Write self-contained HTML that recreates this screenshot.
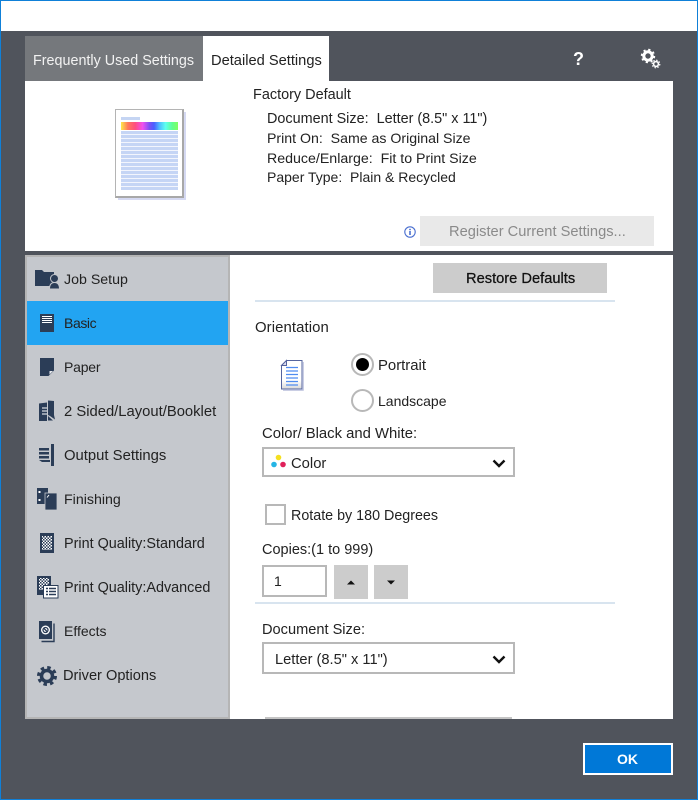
<!DOCTYPE html>
<html><head><meta charset="utf-8"><style>
html,body{margin:0;padding:0;width:698px;height:800px;overflow:hidden;background:#fff}
body{position:relative;font-family:"Liberation Sans",sans-serif;font-size:14px;color:#222}
.a{position:absolute}
.t{position:absolute;white-space:nowrap;line-height:20px;height:20px}
svg{position:absolute;overflow:visible}
</style></head><body>
<div class="a" style="left:0;top:0;width:696px;height:798px;border:1px solid #0f80d8"></div>
<div class="a" style="left:1px;top:31px;width:696px;height:768px;background:#50545c"></div>
<div class="a" style="left:25px;top:36px;width:178px;height:45px;background:#75787c"></div>
<div class="a" style="left:203px;top:36px;width:126px;height:45px;background:#fff"></div>
<div class="t" style="left:33px;top:51px;color:#f2f2f2;font-size:14.35px">Frequently Used Settings</div>
<div class="t" style="left:211px;top:51px;font-size:14.66px">Detailed Settings</div>
<div class="t" style="left:573px;top:49px;color:#fff;font-weight:bold;font-size:18px">?</div>
<svg style="left:640px;top:48px" width="22" height="22" viewBox="0 0 22 22"><circle cx="8" cy="8" r="4.2" fill="none" stroke="#fff" stroke-width="3"/><circle cx="8" cy="8" r="6.2" fill="none" stroke="#fff" stroke-width="2" stroke-dasharray="2.2 2.67"/><circle cx="16" cy="16" r="2.4" fill="none" stroke="#fff" stroke-width="1.6"/><circle cx="16" cy="16" r="3.8" fill="none" stroke="#fff" stroke-width="1.2" stroke-dasharray="1.5 1.48"/></svg>

<div class="a" style="left:25px;top:81px;width:648px;height:170px;background:#fff"></div>
<div class="a" style="left:118px;top:112px;width:68px;height:88px;background:#d5d9f2"></div>
<div class="a" style="left:115px;top:109px;width:66px;height:86px;background:#fff;border:1px solid #b4b4b4;border-right:2px solid #a8a8a8;border-bottom:2px solid #a8a8a8"></div>
<div class="a" style="left:121px;top:117px;width:19px;height:3px;background:#c5d5f3"></div>
<div class="a" style="left:121px;top:122px;width:57px;height:8px;background:linear-gradient(90deg,#ffe84a 0%,#ff7a5a 12%,#ff4f7f 25%,#f04ff0 38%,#7a50f5 50%,#4a60ff 58%,#4fc0ff 68%,#5ffff0 78%,#60ff90 90%,#80ff60 100%)"></div>
<div class="a" style="left:121px;top:131px;width:57px;height:59px;background:repeating-linear-gradient(180deg,#c5d5f5 0,#c5d5f5 3px,#f2f5fd 3px,#f2f5fd 4px)"></div>
<div class="t" style="left:253px;top:85px;font-size:14.45px">Factory Default</div>
<div class="t" style="left:267px;top:109px;font-size:14.4px">Document Size:&nbsp; Letter (8.5" x 11")</div>
<div class="t" style="left:267px;top:128px;font-size:14.15px">Print On:&nbsp; Same as Original Size</div>
<div class="t" style="left:267px;top:149px;font-size:14.2px">Reduce/Enlarge:&nbsp; Fit to Print Size</div>
<div class="t" style="left:267px;top:167px">Paper Type:&nbsp; Plain &amp; Recycled</div>
<svg style="left:404px;top:226px" width="12" height="12" viewBox="0 0 12 12"><circle cx="6" cy="6" r="5.2" fill="none" stroke="#4a6fd0" stroke-width="1.1"/><rect x="5.2" y="5" width="1.6" height="4" fill="#4a6fd0"/><rect x="5.2" y="2.8" width="1.6" height="1.4" fill="#4a6fd0"/></svg>
<div class="a" style="left:420px;top:216px;width:234px;height:30px;background:#e9e9e9"></div>
<div class="t" style="left:449px;top:222px;color:#8a8a8a;font-size:14.66px">Register Current Settings...</div>

<div class="a" style="left:25px;top:255px;width:201px;height:460px;background:#c5c8cd;border:2px solid #b5b5b5"></div>
<div class="a" style="left:230px;top:255px;width:443px;height:464px;background:#fff"></div>
<div class="a" style="left:27px;top:301px;width:201px;height:44px;background:#22a4f2"></div>

<div class="t" style="left:64px;top:270px;font-size:14.2px">Job Setup</div>
<div class="t" style="left:64px;top:313px;letter-spacing:-.4px">Basic</div>
<div class="t" style="left:64px;top:357px;letter-spacing:-.2px">Paper</div>
<div class="t" style="left:64px;top:402px;font-size:14.8px">2 Sided/Layout/Booklet</div>
<div class="t" style="left:64px;top:446px;font-size:14.85px">Output Settings</div>
<div class="t" style="left:64px;top:490px;font-size:14.2px">Finishing</div>
<div class="t" style="left:64px;top:534px;font-size:14.4px">Print Quality:Standard</div>
<div class="t" style="left:64px;top:578px;font-size:14.4px">Print Quality:Advanced</div>
<div class="t" style="left:64px;top:621px">Effects</div>
<div class="t" style="left:63px;top:666px;font-size:14.6px">Driver Options</div>

<svg style="left:35px;top:269px" width="24" height="21" viewBox="0 0 24 21"><path d="M0 1h7l2 2h10v14H0z" fill="#2b3d57"/><circle cx="19.500" cy="9.500" r="4" fill="#2b3d57" stroke="#c5c8cd"/><path d="M14.500 20c0-5 2-6.500 5-6.500s5 1.500 5 6.500z" fill="#2b3d57" stroke="#c5c8cd"/></svg>
<svg style="left:40px;top:314px" width="14" height="18" viewBox="0 0 14 18"><rect width="14" height="18" fill="#2b3d57"/><path d="M2 2.500h10M2 4.500h10M2 6.500h10M2 8.500h10" stroke="#fff" stroke-width="1"/></svg>
<svg style="left:40px;top:358px" width="14" height="18" viewBox="0 0 14 18"><path d="M0 0h14v12.500l-5.500 5.500H0z" fill="#2b3d57"/><path d="M9.500 13h3.500l-3.500 3.500z" fill="#e6e8ec"/></svg>
<svg style="left:39px;top:400px" width="16" height="21" viewBox="0 0 16 21"><path d="M0 3.500l8-1V21H0z" fill="#2b3d57"/><path d="M9 .5l6 .5v14l1 4.500-5-3.500-2-1z" fill="#2b3d57"/><path d="M3 8h5M3 11h5M3 14h5" stroke="#fff"/><path d="M9 16l5 4.500H9z" fill="#2b3d57"/></svg>
<svg style="left:39px;top:444px" width="16" height="22" viewBox="0 0 16 22"><rect x="12" width="3" height="22" fill="#2b3d57"/><path d="M0 4h10v2.500H0zM0 8h10v2.500H0zM0 12h10v2.500H0zM0 16h11v2l-8 0z" fill="#2b3d57"/></svg>
<svg style="left:37px;top:488px" width="20" height="22" viewBox="0 0 20 22"><rect width="11" height="16" fill="#2b3d57"/><rect x="1.500" y="3" width="2" height="2" fill="#fff"/><rect x="1.500" y="11" width="2" height="2" fill="#fff"/><rect x="8" y="5" width="12" height="17" fill="#2b3d57" stroke="#c5c8cd" stroke-width=".8"/><path d="M10 9.500l2-2.500" stroke="#fff"/></svg>
<svg style="left:40px;top:533px" width="14" height="20" viewBox="0 0 14 20"><defs><pattern id="c" width="3" height="3" patternUnits="userSpaceOnUse"><rect width="3" height="3" fill="#fff"/><rect width="1.500" height="1.500" fill="#2b3d57"/><rect x="1.500" y="1.500" width="1.500" height="1.500" fill="#2b3d57"/></pattern></defs><rect width="14" height="20" fill="#2b3d57"/><rect x="2" y="3" width="10" height="14" fill="url(#c)"/></svg>
<svg style="left:37px;top:576px" width="22" height="23" viewBox="0 0 22 23"><rect width="14" height="19" fill="#2b3d57"/><rect x="2" y="2" width="10" height="12" fill="url(#c)"/><rect x="6.500" y="9.500" width="14.500" height="12.500" fill="#fff" stroke="#2b3d57"/><path d="M9 12.500h10M9 15.500h10M9 18.500h10" stroke="#2b3d57" stroke-width="1.500"/><path d="M11.500 11v10" stroke="#fff"/></svg>
<svg style="left:39px;top:621px" width="16" height="21" viewBox="0 0 16 21"><path d="M15 2.500v18H2.500" fill="none" stroke="#2b3d57" stroke-width="1.400"/><rect width="13" height="18" fill="#2b3d57"/><circle cx="6.500" cy="9" r="4.500" fill="#fff"/><circle cx="6.500" cy="9" r="2.500" fill="none" stroke="#2b3d57" stroke-width="1.300"/><path d="M5 7.500l3 3" stroke="#2b3d57" stroke-width="1.300"/></svg>
<svg style="left:37px;top:666px" width="20" height="20" viewBox="0 0 20 20"><circle cx="10" cy="10" r="5.500" fill="none" stroke="#2b3d57" stroke-width="3.500"/><circle cx="10" cy="10" r="8.500" fill="none" stroke="#2b3d57" stroke-width="3" stroke-dasharray="3.500 3.170"/></svg>

<div class="a" style="left:433px;top:263px;width:174px;height:30px;background:#ccc"></div>
<div class="t" style="left:466px;top:269px;color:#111;-webkit-text-stroke:.25px #111;font-size:14.66px">Restore Defaults</div>
<div class="a" style="left:255px;top:300px;width:360px;height:2px;background:#d8e4ef"></div>
<div class="t" style="left:255px;top:318px;font-size:14.9px;letter-spacing:.1px">Orientation</div>
<svg style="left:281px;top:360px" width="23" height="31" viewBox="0 0 23 31"><defs><linearGradient id="g" x1="0" y1="0" x2="0" y2="1"><stop offset="0" stop-color="#fff"/><stop offset=".7" stop-color="#fff"/><stop offset="1" stop-color="#d8d8d8"/></linearGradient></defs><path d="M5.500.5h15.500v28.500H.5V5.500z" fill="url(#g)" stroke="#55649e"/><path d="M22 2v28H2" fill="none" stroke="#b8bedb" stroke-width="1.500"/><path d="M5.500.5v5H.5z" fill="#dde" stroke="#55649e"/><path d="M5 7.500h12M5 11h12M5 14.500h12M5 18h12M5 21.500h12M5 25h12" stroke="#4f8cf0" stroke-width="1.300"/></svg>
<div class="a" style="left:351px;top:353px;width:19px;height:19px;border:2px solid #b8b8b8;border-radius:50%"></div>
<div class="a" style="left:356px;top:358px;width:13px;height:13px;background:#000;border-radius:50%"></div>
<div class="t" style="left:378px;top:356px;font-size:14.9px">Portrait</div>
<div class="a" style="left:351px;top:389px;width:19px;height:19px;border:2px solid #b8b8b8;border-radius:50%"></div>
<div class="t" style="left:378px;top:391px">Landscape</div>
<div class="t" style="left:262px;top:424px;font-size:14.85px">Color/ Black and White:</div>
<div class="a" style="left:262px;top:447px;width:249px;height:26px;border:2px solid #b8b8b8"></div>
<svg style="left:271px;top:454px" width="15" height="15" viewBox="0 0 15 15"><circle cx="7.500" cy="3.500" r="2.800" fill="#f5e020"/><circle cx="3" cy="10.500" r="2.800" fill="#25b5e5"/><circle cx="12" cy="10.500" r="2.800" fill="#e0205a"/></svg>
<div class="t" style="left:291px;top:454px;font-size:14.8px">Color</div>
<svg style="left:492px;top:459px" width="14" height="9" viewBox="0 0 14 9"><path d="M1.500 1.500L7 7l5.500-5.500" fill="none" stroke="#111" stroke-width="2.400"/></svg>
<div class="a" style="left:265px;top:504px;width:17px;height:17px;border:2px solid #b8b8b8"></div>
<div class="t" style="left:291px;top:506px;font-size:14.3px">Rotate by 180 Degrees</div>
<div class="t" style="left:262px;top:540px;font-size:14.5px">Copies:(1 to 999)</div>
<div class="a" style="left:262px;top:565px;width:61px;height:28px;border:2px solid #b8b8b8"></div>
<div class="t" style="left:274px;top:571px">1</div>
<div class="a" style="left:334px;top:565px;width:34px;height:34px;background:#ccc"></div>
<div class="a" style="left:374px;top:565px;width:34px;height:34px;background:#ccc"></div>
<svg style="left:334px;top:565px" width="74" height="34" viewBox="0 0 74 34"><path d="M13 19.500l4-4 4 4z" fill="#111"/><path d="M53 15.500h8l-4 4z" fill="#111"/></svg>
<div class="a" style="left:255px;top:602px;width:360px;height:2px;background:#d8e4ef"></div>
<div class="t" style="left:262px;top:620px;font-size:14.6px">Document Size:</div>
<div class="a" style="left:262px;top:642px;width:249px;height:28px;border:2px solid #b8b8b8"></div>
<div class="t" style="left:275px;top:650px;font-size:14.65px">Letter (8.5" x 11")</div>
<svg style="left:492px;top:655px" width="14" height="9" viewBox="0 0 14 9"><path d="M1.500 1.500L7 7l5.500-5.500" fill="none" stroke="#111" stroke-width="2.400"/></svg>
<div class="a" style="left:265px;top:717px;width:247px;height:2px;background:#c4c4c4"></div>
<div class="a" style="left:583px;top:743px;width:86px;height:28px;background:#0078d7;border:2px solid #fff"></div>
<div class="t" style="left:617px;top:749px;color:#fff;font-weight:bold">OK</div>
</body></html>
